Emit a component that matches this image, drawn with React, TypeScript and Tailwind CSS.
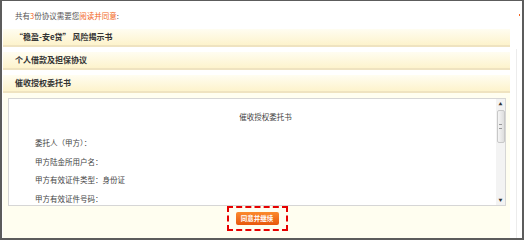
const font = "font-['Noto_Sans_CJK_SC','Noto_Sans',sans-serif]";

/** 协议标题栏 */
function AgreementBar({ title }: { title: string }) {
  return (
    <div className="flex h-[18px] items-center border-b-2 border-[#efe3c0] bg-gradient-to-b from-[#fffdf1] to-[#fdf3cc] pl-3 text-[8px] font-bold text-[#333]">
      {title}
    </div>
  );
}

export default function App() {
  const lines = ['委托人（甲方）：', '甲方陆金所用户名：', '甲方有效证件类型：身份证', '甲方有效证件号码：'];

  return (
    <div className={`flex h-[240px] w-[524px] border-2 border-t border-[#5c5c5c] bg-white ${font}`}>
      {/* 左侧主体 */}
      <div className="ml-[1px] flex w-[507px] flex-col">
        <div className="flex h-[28px] items-center pl-3 pt-[1px] text-[7.5px] text-[#555]">
          共有<span className="text-[#f26522]">3</span>份协议需要您<span className="text-[#f26522]">阅读并同意</span>:
        </div>
        <div className="flex flex-col gap-[5px]">
          <AgreementBar title="“稳盈-安e贷” 风险揭示书" />
          <AgreementBar title="个人借款及担保协议" />
          <AgreementBar title="催收授权委托书" />
        </div>

        {/* 展开的协议内容 */}
        <div className="flex flex-1 flex-col bg-[#fffef0] pl-[5px] pr-[4px] pt-[5px]">
          <div className="flex h-[108px] border border-[#d6d6d6] bg-white">
            <div className="flex flex-1 flex-col pl-[26px] pt-[13px] text-[7.5px] text-[#444]">
              <div className="mb-[12px] text-center leading-[10px]">催收授权委托书</div>
              <div className="flex flex-col leading-[18.7px]">
                {lines.map(l => (
                  <div key={l}>{l}</div>
                ))}
              </div>
            </div>
            {/* 滚动条 */}
            <div className="flex w-[9px] flex-col items-center bg-[#f3f3f3] py-[2px]">
              <div className="text-[4px] leading-[6px] text-[#333]">▲</div>
              <div className="mt-[3px] flex h-[33px] w-[8px] items-center justify-center rounded-[2px] border border-[#c8c8c8] bg-gradient-to-r from-[#f5f5f5] to-[#dedede]">
                <div className="h-[5px] w-[3px] border-y border-[#999]" />
              </div>
              <div className="flex-1" />
              <div className="text-[4px] leading-[6px] text-[#333]">▼</div>
            </div>
          </div>

          <div className="flex flex-1 items-start justify-center">
            <div className="flex h-[25px] w-[61px] items-center justify-center border-2 border-dashed border-[#e60000]">
              <button className="h-[13px] w-[43px] rounded-[2px] bg-gradient-to-b from-[#fb8a2c] to-[#e8560a] text-[6.5px] font-bold text-white">
                同意并继续
              </button>
            </div>
          </div>
        </div>
      </div>

      {/* 右侧 */}
      <div className="flex flex-1 flex-col items-center">
        <div className="mt-[13px] ml-[6px] h-[2px] w-[1px] bg-[#f26522]" />
        <div className="mt-[33px] ml-[1px] w-[1px] flex-1 bg-[#ececec]" />
      </div>
    </div>
  );
}
